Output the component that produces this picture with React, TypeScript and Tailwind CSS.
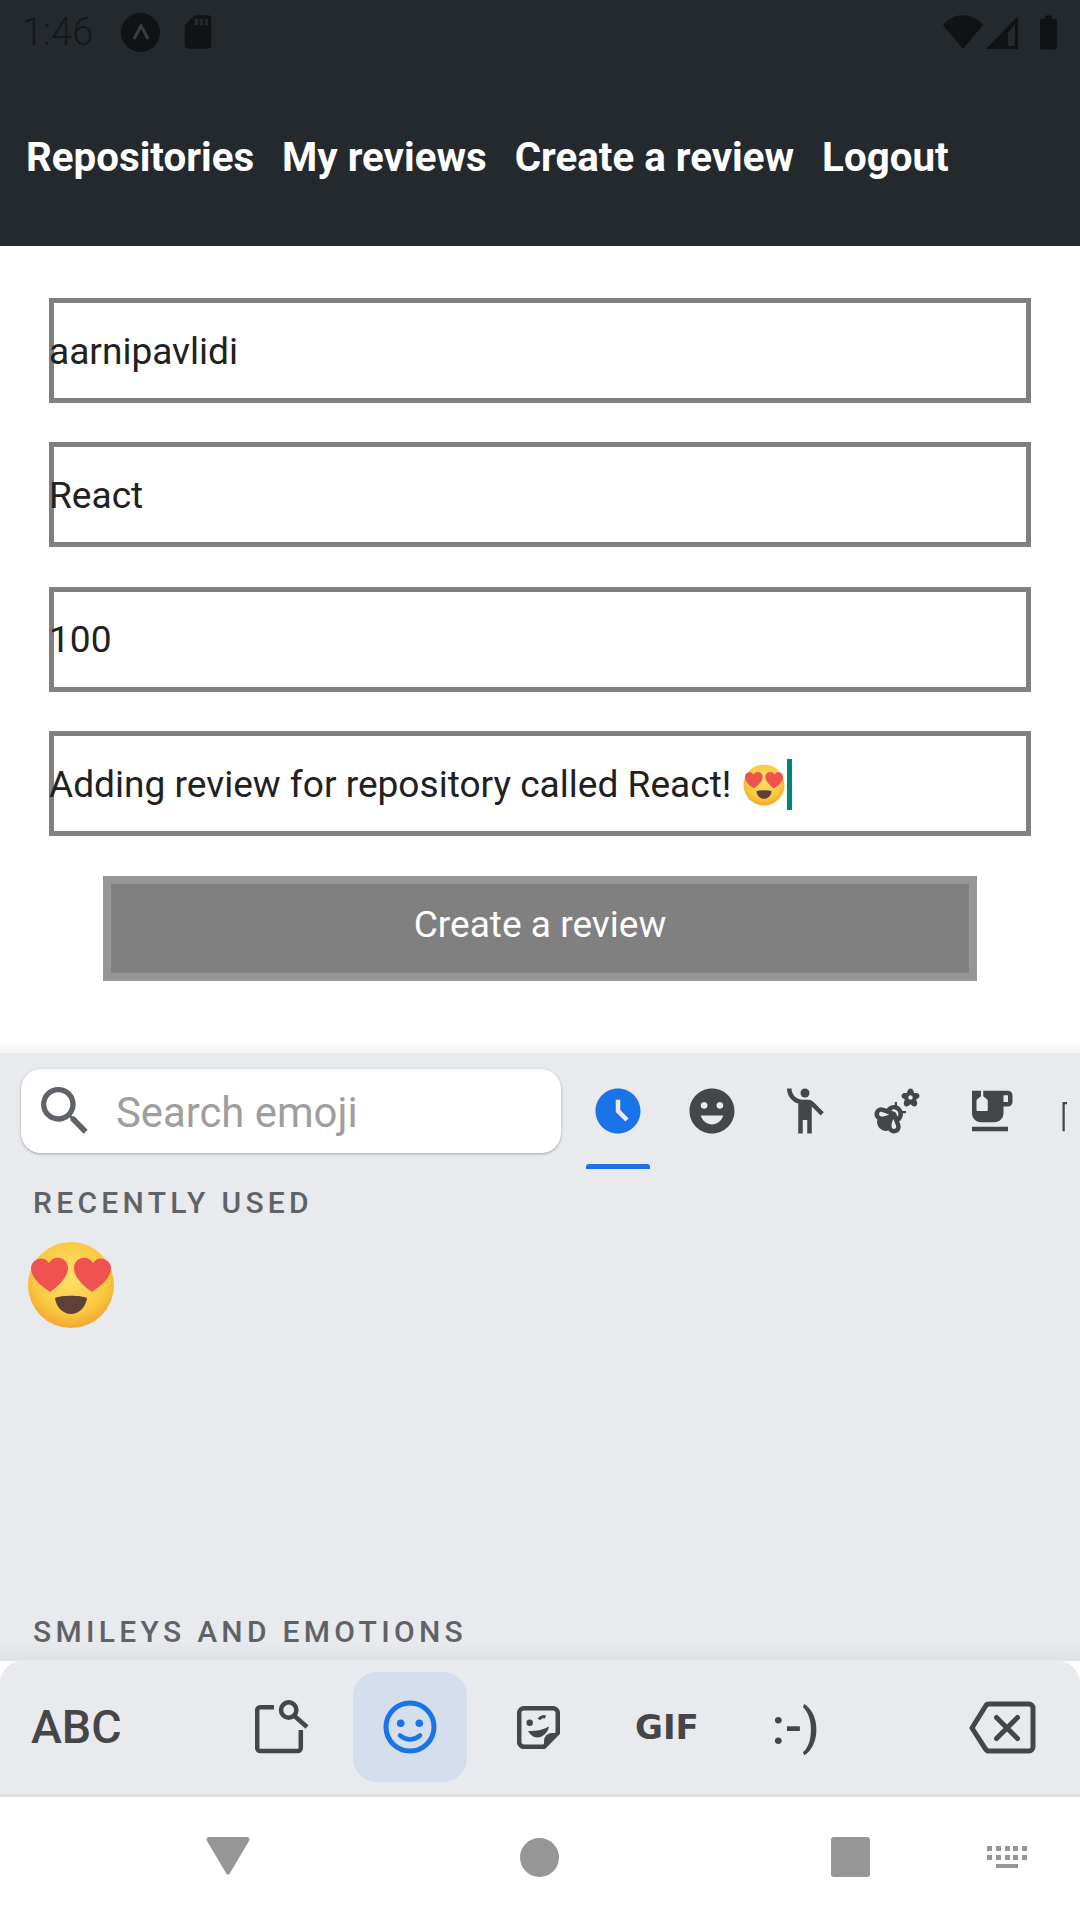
import {
  MdAccessTimeFilled,
  MdBatteryFull,
  MdEmojiEmotions,
  MdEmojiFoodBeverage,
  MdEmojiNature,
  MdEmojiPeople,
  MdEmojiTransportation,
  MdSdCard,
  MdSearch,
} from 'react-icons/md';

const navLinks = ['Repositories', 'My reviews', 'Create a review', 'Logout'];

function HeartEyes({ size }: { size: number }) {
  return (
    <svg width={size} height={size} viewBox="0 0 44 44">
      <defs>
        <radialGradient id={`face${size}`} cx="50%" cy="40%" r="60%">
          <stop offset="0%" stopColor="#fde168" />
          <stop offset="70%" stopColor="#fbc943" />
          <stop offset="100%" stopColor="#f1a92c" />
        </radialGradient>
      </defs>
      <circle cx="22" cy="22" r="21.5" fill={`url(#face${size})`} />
      <path d="M11.5 25.5C8 23 2 19 2 13.5 2 9.5 8 6.5 11 11 13.5 6.5 20.5 8 20.5 13.5 20.5 18.5 15 23 11.5 25.5Z" fill="#ef5350" />
      <path d="M32.5 25.5C36 23 42 19 42 13.5 42 9.5 36 6.5 33 11 30.5 6.5 23.5 8 23.5 13.5 23.5 18.5 29 23 32.5 25.5Z" fill="#ef5350" />
      <path d="M14 28.5C17 27 27 27 30 28.5 29.5 33 26 36.5 22 36.5 18 36.5 14.5 33 14 28.5Z" fill="#5d4037" />
    </svg>
  );
}

function Field({ value }: { value: string }) {
  return (
    <div className="flex h-[105px] items-center bg-white pt-[2px] text-[37.1px] text-[#212121] shadow-[inset_0_0_0_5px_#808080]">
      {value}
    </div>
  );
}

function FindIcon() {
  return (
    <svg width="54" height="54" viewBox="0 0 54 54" fill="none" stroke="#444649" strokeWidth="4.5">
      <path d="M19 7.2H5.2a3 3 0 0 0-3 3V48a3 3 0 0 0 3 3h37.6a3 3 0 0 0 3-3V30" />
      <circle cx="33.7" cy="10" r="7.7" />
      <path d="M39.5 16 52 27" />
    </svg>
  );
}

function SmileIcon() {
  return (
    <svg width="54" height="54" viewBox="-27 -27 54 54" fill="none" stroke="#1a73e8">
      <circle r="24" strokeWidth="5" />
      <circle cx="-9.3" cy="-3.7" r="3.8" fill="#1a73e8" stroke="none" />
      <circle cx="9.3" cy="-3.7" r="3.8" fill="#1a73e8" stroke="none" />
      <path d="M-10 8.5q10 8 20 0" strokeWidth="4.5" strokeLinecap="round" />
    </svg>
  );
}

function StickerIcon() {
  return (
    <svg width="43" height="43" viewBox="0 0 43 43" fill="none">
      <path d="M7 2.2h29a4.8 4.8 0 0 1 4.8 4.8v20L27 40.8H7A4.8 4.8 0 0 1 2.2 36V7A4.8 4.8 0 0 1 7 2.2Z" stroke="#444649" strokeWidth="4.5" strokeLinejoin="round" />
      <path d="M42 27h-7a8 8 0 0 0-8 8v7Z" fill="#444649" />
      <circle cx="12.7" cy="16.7" r="3.2" fill="#444649" />
      <path d="M22 13.5c1-2 4-3.5 6.5-2.5" stroke="#444649" strokeWidth="3.2" />
      <path d="M11 25c7 .5 15-1 21-4.5-1 6-6 11-12 11-4 0-7-3-9-6.5Z" fill="#444649" />
    </svg>
  );
}

function BackspaceIcon() {
  return (
    <svg width="67" height="53" viewBox="0 0 67 53" fill="none" stroke="#444649" strokeWidth="5" strokeLinejoin="round">
      <path d="M20 3h40a4 4 0 0 1 4 4v39a4 4 0 0 1-4 4H20a4 4 0 0 1-3.4-1.9L3 27 16.6 5a4 4 0 0 1 3.4-2Z" />
      <path d="M27.5 16.5 48.5 37.5M48.5 16.5 27.5 37.5" strokeLinecap="round" />
    </svg>
  );
}

export default function App() {
  return (
    <div className="flex h-[1920px] w-[1080px] flex-col overflow-hidden bg-white font-[family-name:Roboto,sans-serif]">
      <header className="flex h-[246px] shrink-0 flex-col bg-[#24292e]">
        <div className="flex h-[64px] items-center justify-between pl-[22px] pr-[11px] text-[#101214]">
          <div className="flex items-center">
            <span className="text-[38px] font-light leading-none text-[#15181a]">1:46</span>
            <div className="ml-[28px] flex h-[39px] w-[39px] items-center justify-center rounded-full bg-[#101214]">
              <svg width="18" height="16" viewBox="0 0 18 16" fill="none" stroke="#3a3e42" strokeWidth="3">
                <path d="M2 15 9 2l7 13" />
              </svg>
            </div>
            <MdSdCard className="ml-[18px] text-[40px]" />
          </div>
          <div className="flex items-center">
            <svg width="40" height="34" viewBox="0 0 40 34" fill="#101214">
              <path d="M0 10C10-3 30-3 40 10L20 34Z" />
            </svg>
            <svg className="ml-[3px]" width="33" height="33" viewBox="0 0 33 33" fill="#101214" fillRule="evenodd">
              <path d="M32 0v33H0ZM29 8l-7 9v13h7Z" />
            </svg>
            <MdBatteryFull className="ml-[9px] text-[41px]" />
          </div>
        </div>
        <nav className="mt-[72px] flex gap-[28px] pl-[26px] text-[40.3px] font-bold leading-[44px] text-white">
          {navLinks.map((link) => (
            <span key={link}>{link}</span>
          ))}
        </nav>
      </header>

      <main className="flex h-[794px] shrink-0 flex-col gap-[39.4px] px-[49px] pt-[52px]">
        <Field value="aarnipavlidi" />
        <Field value="React" />
        <Field value="100" />
        <div className="flex h-[105px] items-center bg-white pt-[2px] text-[37.1px] text-[#212121] shadow-[inset_0_0_0_5px_#808080]">
          Adding review for repository called React!
          <span className="ml-[12px]">
            <HeartEyes size={42} />
          </span>
          <span className="ml-[2px] h-[51px] w-[5px] bg-[#008577]" />
        </div>
        <button className="mx-[54px] h-[105px] border-[8px] border-[#969696] bg-[#808080] pb-[6px] text-[37.1px] text-white">
          Create a review
        </button>
      </main>

      <div className="h-[13px] shrink-0 bg-gradient-to-b from-white to-[#f3f4f5]" />

      <section className="relative flex min-h-0 flex-1 flex-col bg-[#e8eaed]">
        <div className="flex h-[116px] shrink-0 items-start overflow-hidden pt-[16px]">
          <div className="ml-[21px] flex h-[84px] w-[540px] shrink-0 items-center rounded-[20px] bg-white pl-[12px] shadow-[0_1px_3px_rgba(0,0,0,0.3)]">
            <MdSearch className="text-[64px] text-[#5f6368]" />
            <span className="ml-[19px] pt-[3px] text-[41.8px] leading-none text-[#9e9e9e]">Search emoji</span>
          </div>
          <div className="ml-[25px] flex h-[100px] shrink-0 items-start text-[54px] text-[#444649]">
            <div className="relative flex h-[84px] w-[64px] items-center justify-center text-[#1a73e8]">
              <MdAccessTimeFilled />
              <span className="absolute left-0 top-[95px] h-[5px] w-[64px] rounded-t-[3px] bg-[#1a73e8]" />
            </div>
            <div className="ml-[35px] flex h-[84px] w-[54px] items-center justify-center"><MdEmojiEmotions /></div>
            <div className="ml-[39px] flex h-[84px] w-[54px] items-center justify-center"><MdEmojiPeople /></div>
            <div className="ml-[38px] flex h-[84px] w-[54px] items-center justify-center"><MdEmojiNature /></div>
            <div className="ml-[39px] flex h-[84px] w-[54px] items-center justify-center"><MdEmojiFoodBeverage /></div>
            <div className="ml-[41px] flex h-[84px] w-[9px] items-center overflow-hidden"><MdEmojiTransportation className="shrink-0" /></div>
          </div>
        </div>
        <p className="ml-[33px] mt-[17px] text-[30px] font-medium leading-[34px] tracking-[4.3px] text-[#5f6368]">RECENTLY USED</p>
        <div className="ml-[27px] mt-[21px]">
          <HeartEyes size={88} />
        </div>
        <p className="ml-[33px] mt-[286px] text-[30px] font-medium leading-[34px] tracking-[4.3px] text-[#5f6368]">SMILEYS AND EMOTIONS</p>
        <div className="absolute inset-x-0 bottom-0 h-[20px] bg-gradient-to-b from-transparent to-[#dfe1e4]" />
      </section>

      <div className="relative -mt-[1px] flex h-[137px] shrink-0 items-center rounded-t-[24px] border-b-[3px] border-[#dfe1e4] bg-[#e8eaed] text-[#444649]">
        <span className="ml-[31px] w-[91px] text-[46.5px] font-medium leading-none">ABC</span>
        <span className="ml-[133px]"><FindIcon /></span>
        <div className="ml-[44px] flex h-[110px] w-[114px] items-center justify-center rounded-[24px] bg-[#d4deed]">
          <SmileIcon />
        </div>
        <span className="ml-[50px]"><StickerIcon /></span>
        <span className="ml-[75px] font-[family-name:'DejaVu_Sans',sans-serif] text-[34px] font-bold leading-none">GIF</span>
        <span className="ml-[73px] text-[50px] font-medium leading-none">:-)</span>
        <span className="ml-[150px]"><BackspaceIcon /></span>
      </div>

      <footer className="flex h-[123px] shrink-0 items-center bg-white pb-[3px]">
        <svg className="mb-[3px] ml-[206px]" width="44" height="38" viewBox="0 0 44 38" fill="#969696">
          <path d="M3 0h38c2 0 3 2 2 4L24 36c-1 2-3 2-4 0L1 4C0 2 1 0 3 0Z" />
        </svg>
        <span className="ml-[270px] h-[39px] w-[39px] rounded-full bg-[#969696]" />
        <span className="ml-[272px] h-[40px] w-[39px] rounded-[3px] bg-[#969696]" />
        <div className="ml-[117px] flex w-[40px] flex-col items-center gap-[4px]">
          <div className="grid grid-cols-5 gap-x-[4px] gap-y-[4px]">
            {Array.from({ length: 10 }).map((_, i) => (
              <span key={i} className="h-[5px] w-[5px] bg-[#969696]" />
            ))}
          </div>
          <span className="h-[4px] w-[22px] bg-[#969696]" />
        </div>
      </footer>
    </div>
  );
}
